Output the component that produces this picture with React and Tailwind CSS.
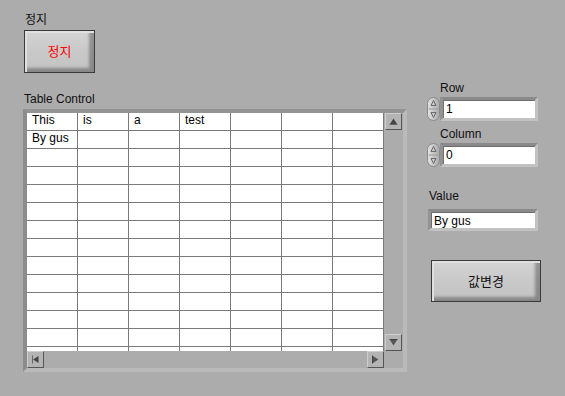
import React from 'react';

const FONT = { fontFamily: '"Liberation Sans", "Noto Sans CJK KR", sans-serif' };

const ROWS = [
  ['This', 'is', 'a', 'test', '', '', ''],
  ['By gus', '', '', '', '', '', ''],
];

function Arrow({ dir }) {
  // small LabVIEW-style triangle with a base line
  const shapes = {
    up: <><path d="M4.5 1.5 L8 7 L1 7 Z" fill="#444" /><line x1="0.5" y1="7.5" x2="8.5" y2="7.5" stroke="#666" /></>,
    down: <><line x1="0.5" y1="1.5" x2="8.5" y2="1.5" stroke="#444" /><path d="M1 2 L8 2 L4.5 7.5 Z" fill="#555" /></>,
    left: <><line x1="1.5" y1="0.5" x2="1.5" y2="8.5" stroke="#666" /><path d="M2 4.5 L7.5 1 L7.5 8 Z" fill="#444" /></>,
    right: <><line x1="1.5" y1="0.5" x2="1.5" y2="8.5" stroke="#444" /><path d="M2 1 L7.5 4.5 L2 8 Z" fill="#555" /></>,
  };
  return <svg width="9" height="9" viewBox="0 0 9 9">{shapes[dir]}</svg>;
}

function ScrollBtn({ dir }) {
  return (
    <div className="w-[17px] h-[17px] flex items-center justify-center bg-[#b4b4b4] border border-t-[#cdcdcd] border-l-[#cdcdcd] border-r-[#555] border-b-[#555]">
      <Arrow dir={dir} />
    </div>
  );
}

function LvButton({ label, className, textClass }) {
  return (
    <div className={`border border-[#3a3a3a] bg-gradient-to-b from-[#d4d4d4] via-[#c9c9c9] to-[#c2c2c2] shadow-[inset_2px_2px_0_#e0e0e0,inset_-5px_-4px_3px_rgba(0,0,0,0.3)] flex items-center justify-center ${className}`}>
      <span className={`text-[13px] leading-[15px] ${textClass}`}>{label}</span>
    </div>
  );
}

function Spinner() {
  return (
    <svg width="13" height="24" viewBox="0 0 13 24">
      <defs>
        <linearGradient id="sp" x1="0" x2="1" y1="0" y2="0">
          <stop offset="0" stopColor="#e4e4e4" />
          <stop offset="1" stopColor="#a9a9a9" />
        </linearGradient>
      </defs>
      <rect x="0.5" y="0.5" width="12" height="23" rx="6" fill="url(#sp)" stroke="#8a8a8a" />
      <line x1="1.5" y1="12" x2="11.5" y2="12" stroke="#9a9a9a" />
      <path d="M6.5 3.5 L9 8.5 L4 8.5 Z" fill="none" stroke="#6a6a6a" />
      <path d="M4 15.5 L9 15.5 L6.5 20.5 Z" fill="none" stroke="#6a6a6a" />
    </svg>
  );
}

function TextBox({ value, className }) {
  return (
    <div className={`border-[3px] border-t-[#8a8a8a] border-l-[#939393] border-r-[#c2c2c2] border-b-[#c2c2c2] bg-white ${className}`}>
      <div className="h-full border-t border-l border-[#6f6f6f] pl-[2px] text-[12px] leading-[16px] text-black">
        {value}
      </div>
    </div>
  );
}

export default function App() {
  const rows = Array.from({ length: 14 }, (_, i) => ROWS[i] || ['', '', '', '', '', '', '']);

  return (
    <div className="w-[565px] h-[396px] bg-[#acacac] flex overflow-hidden text-[#111]" style={FONT}>
      {/* Left column */}
      <div className="ml-[23px] pt-[13px] flex flex-col">
        <div className="ml-[2px] text-[12px] leading-[15px]">정지</div>
        <LvButton label="정지" className="mt-[2px] ml-[1px] w-[71px] h-[43px]" textClass="text-[#ff0000]" />
        <div className="mt-[19px] ml-[1px] text-[12px] leading-[15px]">Table Control</div>

        {/* Table */}
        <div className="mt-[2px] w-[384px] h-[263px] border-[4px] border-t-[#939393] border-l-[#8c8c8c] border-r-[#bababa] border-b-[#bababa] flex flex-col">
          <div className="flex">
            <div className="w-[357px] h-[238px] bg-white overflow-hidden">
              {rows.map((r, i) => (
                <div key={i} className="flex">
                  {r.map((c, j) => (
                    <div key={j} className="w-[51px] h-[18px] shrink-0 border-r border-b border-[#7b7b7b] pl-[5px] text-[12px] leading-[15px] text-black">
                      {c}
                    </div>
                  ))}
                </div>
              ))}
            </div>
            <div className="w-[19px] h-[238px] flex flex-col justify-between items-end pr-[1px]">
              <ScrollBtn dir="up" />
              <ScrollBtn dir="down" />
            </div>
          </div>
          <div className="flex">
            <div className="w-[357px] h-[17px] flex justify-between">
              <ScrollBtn dir="left" />
              <ScrollBtn dir="right" />
            </div>
          </div>
        </div>
      </div>

      {/* Right column */}
      <div className="ml-[20px] pt-[81px] flex flex-col">
        <div className="ml-[13px] text-[12px] leading-[15px]">Row</div>
        <div className="mt-[1px] flex items-center">
          <Spinner />
          <TextBox value="1" className="w-[98px] h-[24px]" />
        </div>
        <div className="mt-[6px] ml-[13px] text-[12px] leading-[15px]">Column</div>
        <div className="mt-[1px] flex items-center">
          <Spinner />
          <TextBox value="0" className="w-[98px] h-[24px]" />
        </div>
        <div className="mt-[22px] ml-[2px] text-[12px] leading-[15px]">Value</div>
        <TextBox value="By gus" className="mt-[5px] ml-[1px] w-[110px] h-[22px]" />
        <LvButton label="값변경" className="mt-[29px] ml-[4px] w-[110px] h-[42px]" textClass="text-[#111]" />
      </div>
    </div>
  );
}
